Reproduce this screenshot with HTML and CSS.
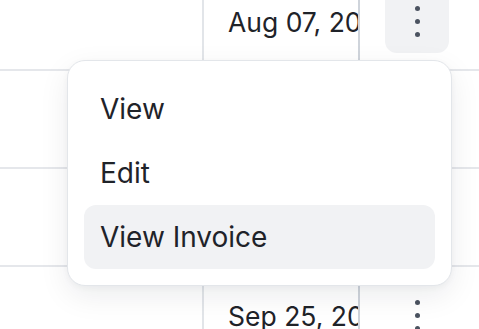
FILE: index.html
```html
<!DOCTYPE html>
<html lang="en">
<head>
  <meta charset="UTF-8" />
  <meta name="viewport" content="width=device-width, initial-scale=1.0"/>
  <title>Invoices</title>
  <link rel="stylesheet" href="styles.css">
</head>
<body>
  <div class="table">
    <div class="row">
      <div class="cell name"></div>
      <div class="cell date">Aug 07, 2024</div>
      <div class="cell actions">
        <button class="kebab active" aria-label="Actions">
          <span></span><span></span><span></span>
        </button>
      </div>
    </div>
    <div class="row">
      <div class="cell name"></div>
      <div class="cell date">Aug 19, 2024</div>
      <div class="cell actions"></div>
    </div>
    <div class="row">
      <div class="cell name"></div>
      <div class="cell date">Sep 02, 2024</div>
      <div class="cell actions"></div>
    </div>
    <div class="row">
      <div class="cell name"></div>
      <div class="cell date">Sep 25, 2024</div>
      <div class="cell actions">
        <button class="kebab" aria-label="Actions">
          <span></span><span></span><span></span>
        </button>
      </div>
    </div>
  </div>

  <ul class="menu">
    <li class="menu-item">View</li>
    <li class="menu-item">Edit</li>
    <li class="menu-item hover">View Invoice</li>
  </ul>
</body>
</html>
```

FILE: styles.css
```css
html, body {
  margin: 0;
  height: 100%;
  overflow: hidden;
}
body {
  font-family: Inter, "Noto Sans", sans-serif;
  color: #1f2329;
  background: #fff;
  position: relative;
}

.table {
  margin-top: -27px;
  width: 560px;
}
.row {
  display: flex;
  height: 96px;
  border-bottom: 2px solid #e5e7eb;
}
.cell {
  display: flex;
  align-items: center;
}
.name {
  width: 202px;
  border-right: 2px solid #e2e5e9;
}
.date {
  width: 156px;
  padding-left: 24px;
  padding-top: 2px;
  box-sizing: border-box;
  font-size: 26.5px;
  white-space: nowrap;
  overflow: hidden;
  border-right: 2px solid #cfd4db;
}
.actions {
  padding-left: 25px;
}

.kebab {
  width: 64px;
  height: 64px;
  border: none;
  border-radius: 12px;
  background: transparent;
  display: flex;
  flex-direction: column;
  align-items: center;
  justify-content: center;
  gap: 8px;
  padding: 0;
}
.kebab.active {
  background: #f1f2f4;
}
.kebab span {
  width: 5px;
  height: 5px;
  border-radius: 50%;
  background: #4b5360;
}

.menu {
  position: absolute;
  top: 60px;
  left: 67px;
  width: 385px;
  box-sizing: border-box;
  margin: 0;
  padding: 16px;
  list-style: none;
  background: #fff;
  border: 1px solid #e3e6ea;
  border-radius: 18px;
  box-shadow: 0 10px 30px rgba(17, 24, 39, 0.08), 0 2px 6px rgba(17, 24, 39, 0.04);
}
.menu-item {
  height: 64px;
  display: flex;
  align-items: center;
  padding-left: 16px;
  font-size: 28px;
  border-radius: 12px;
}
.menu-item.hover {
  background: #f1f2f4;
}
```
